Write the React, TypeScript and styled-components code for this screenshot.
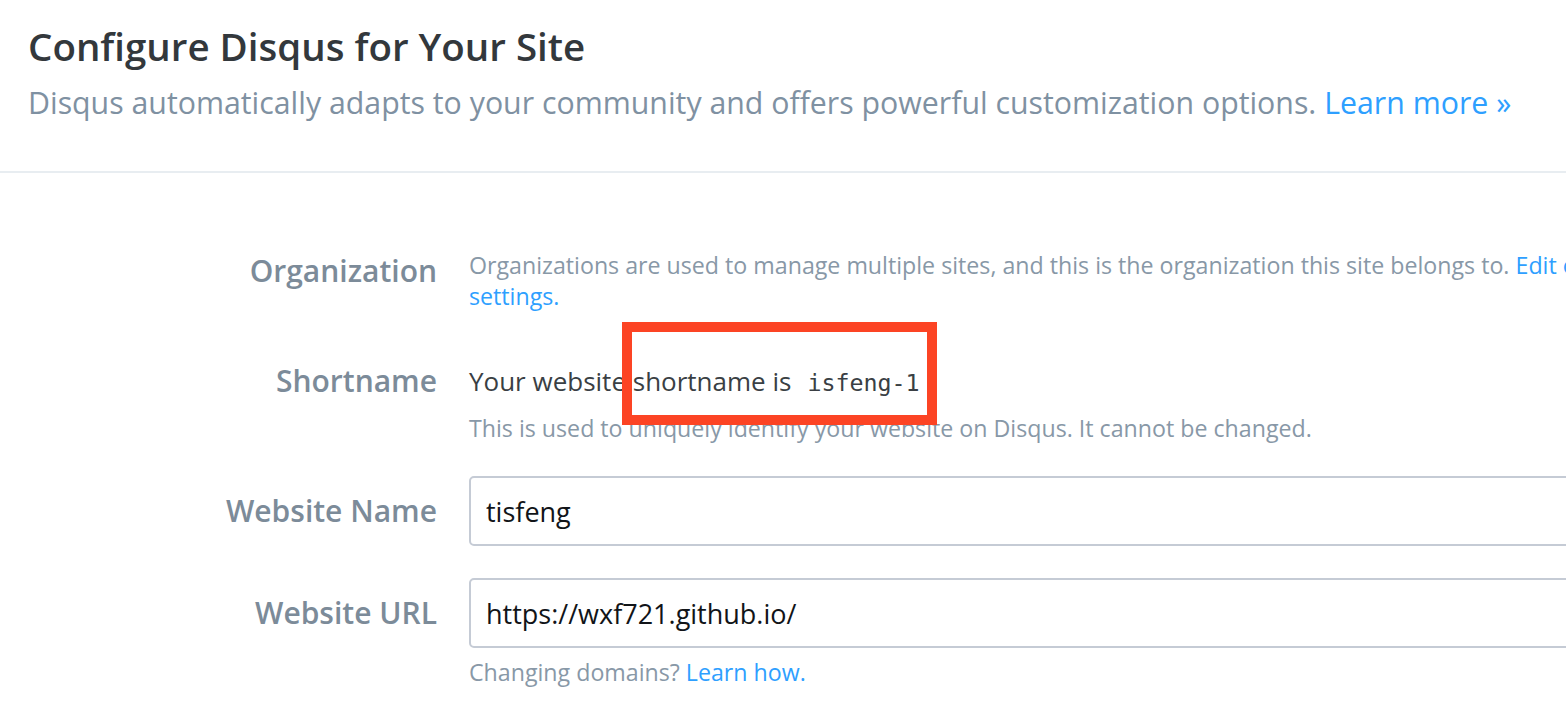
import styled, { createGlobalStyle } from 'styled-components'

const GlobalStyle = createGlobalStyle`
  html, body {
    margin: 0;
    padding: 0;
    background: #ffffff;
    overflow: hidden;
  }
  body {
    font-family: 'Open Sans', 'Noto Sans', sans-serif;
    -webkit-font-smoothing: antialiased;
  }
`

const Page = styled.div`
  width: 1566px;
  height: 710px;
  overflow: hidden;
`

const Header = styled.header`
  padding: 24px 28px 46px;
  border-bottom: 2px solid #e8edf1;
`

const Title = styled.h1`
  margin: 0;
  font-size: 38.5px;
  line-height: 44px;
  font-weight: 600;
  color: #33383c;
`

const Subtitle = styled.p`
  margin: 13px 0 0;
  font-size: 30.3px;
  line-height: 44px;
  font-weight: 400;
  color: #7f91a2;
  white-space: nowrap;
`

const Link = styled.a`
  color: #2e9fff;
  text-decoration: none;
  cursor: pointer;
`

const Form = styled.div`
  width: 1900px;
  padding-top: 77px;
  display: flex;
  flex-direction: column;
  gap: 32px;
`

const Row = styled.div<{ $extra?: number }>`
  display: grid;
  grid-template-columns: 437px 1fr;
  column-gap: 32px;
  align-items: start;
  margin-bottom: ${({ $extra }) => $extra || 0}px;
`

const Label = styled.div<{ $line?: number }>`
  text-align: right;
  font-size: 30px;
  font-weight: 600;
  color: #7c8b99;
  line-height: ${({ $line }) => $line || 42}px;
  white-space: nowrap;
`

const Field = styled.div`
  display: flex;
  flex-direction: column;
`

const Description = styled.div`
  font-size: 23.2px;
  line-height: 31px;
  color: #8898a7;
  white-space: nowrap;
`

const Helper = styled(Description)`
  margin-top: 9px;
`

const Statement = styled.div`
  font-size: 26px;
  line-height: 42px;
  color: #3a3f44;
  white-space: nowrap;
`

// red annotation box drawn over the shortname sentence
const Highlight = styled.span`
  position: relative;
  display: inline-block;

  &::after {
    content: '';
    position: absolute;
    left: -11px;
    right: -17px;
    top: -38px;
    bottom: -21px;
    border: 10px solid #fc4424;
    pointer-events: none;
  }
`

const Code = styled.code`
  margin-left: 16px;
  font-family: 'DejaVu Sans Mono', 'Liberation Mono', monospace;
  font-size: 23.3px;
  color: #3a3f44;
`

const Input = styled.input`
  box-sizing: border-box;
  width: 100%;
  height: 70px;
  border: 2px solid #c5cbd5;
  border-radius: 5px;
  padding: 0 15px;
  font-family: 'Open Sans', 'Noto Sans', sans-serif;
  font-size: 27px;
  color: #111418;
  background: #fff;
  outline: none;
`

export default function App() {
  return (
    <Page>
      <GlobalStyle />
      <Header>
        <Title>Configure Disqus for Your Site</Title>
        <Subtitle>
          Disqus automatically adapts to your community and offers powerful
          customization options. <Link>Learn more »</Link>
        </Subtitle>
      </Header>
      <Form>
        <Row $extra={16}>
          <Label>Organization</Label>
          <Description>
            Organizations are used to manage multiple sites, and this is the
            organization this site belongs to.{' '}
            <Link>Edit organization</Link>
            <br />
            <Link>settings.</Link>
          </Description>
        </Row>
        <Row>
          <Label>Shortname</Label>
          <Field>
            <Statement>
              Your website{' '}
              <Highlight>
                shortname is<Code>isfeng-1</Code>
              </Highlight>
            </Statement>
            <Helper>
              This is used to uniquely identify your website on Disqus. It
              cannot be changed.
            </Helper>
          </Field>
        </Row>
        <Row>
          <Label $line={70}>Website Name</Label>
          <Input defaultValue="tisfeng" />
        </Row>
        <Row>
          <Label $line={70}>Website URL</Label>
          <Field>
            <Input defaultValue="https://wxf721.github.io/" />
            <Helper>
              Changing domains? <Link>Learn how.</Link>
            </Helper>
          </Field>
        </Row>
      </Form>
    </Page>
  )
}
